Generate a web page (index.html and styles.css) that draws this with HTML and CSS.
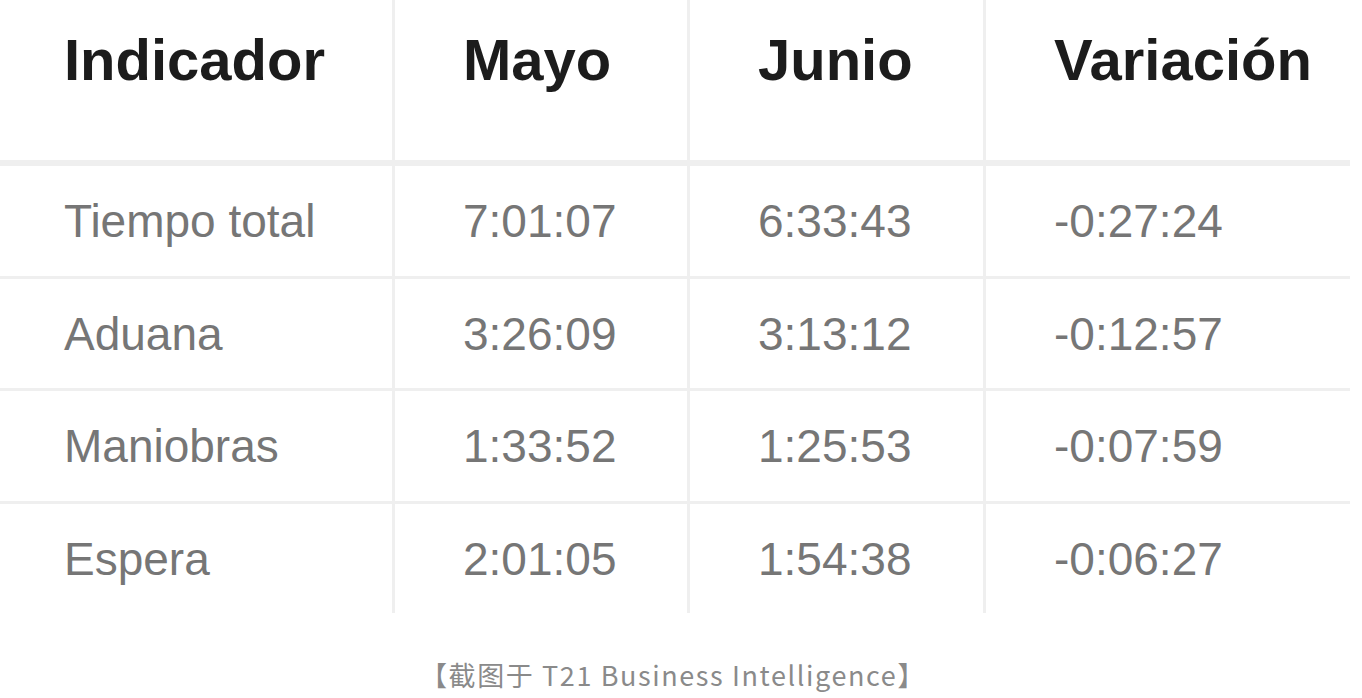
FILE: index.html
```html
<!DOCTYPE html>
<html>

<head>
    <meta charset="UTF-8">
    <title>Indicadores</title>
    <link rel="stylesheet" href="styles.css">
</head>

<body>
    <div class="wrap">
        <table class="grid">
            <colgroup>
                <col class="c1">
                <col class="c2">
                <col class="c3">
                <col class="c4">
            </colgroup>
            <thead>
                <tr>
                    <th>Indicador</th>
                    <th>Mayo</th>
                    <th>Junio</th>
                    <th>Variación</th>
                </tr>
            </thead>
            <tbody>
                <tr>
                    <td>Tiempo total</td>
                    <td>7:01:07</td>
                    <td>6:33:43</td>
                    <td>-0:27:24</td>
                </tr>
                <tr>
                    <td>Aduana</td>
                    <td>3:26:09</td>
                    <td>3:13:12</td>
                    <td>-0:12:57</td>
                </tr>
                <tr>
                    <td>Maniobras</td>
                    <td>1:33:52</td>
                    <td>1:25:53</td>
                    <td>-0:07:59</td>
                </tr>
                <tr>
                    <td>Espera</td>
                    <td>2:01:05</td>
                    <td>1:54:38</td>
                    <td>-0:06:27</td>
                </tr>
            </tbody>
        </table>
        <p class="caption">【截图于 T21 Business Intelligence】</p>
    </div>
</body>

</html>
```

FILE: styles.css
```css
body {
    margin: 0;
    background: #fff;
    font-family: "Liberation Sans", Arial, sans-serif;
}

.wrap {
    width: 1350px;
}

.grid {
    width: 1350px;
    table-layout: fixed;
    border-collapse: separate;
    border-spacing: 0;
}

.c1 {
    width: 392px;
}

.c2 {
    width: 295px;
}

.c3 {
    width: 296px;
}

.c4 {
    width: 367px;
}

.grid th,
.grid td {
    text-align: left;
    vertical-align: top;
    padding-left: 68px;
    white-space: nowrap;
}

.grid th:first-child,
.grid td:first-child {
    padding-left: 64px;
}

.grid th + th,
.grid td + td {
    border-left: 3px solid #efefef;
}

.grid th {
    height: 58px;
    padding-top: 31px;
    padding-bottom: 71px;
    font-size: 58px;
    line-height: 58px;
    font-weight: bold;
    color: #1c1c1c;
    border-bottom: 6px solid #efefef;
}

.grid td {
    height: 46px;
    padding-top: 32px;
    padding-bottom: 31.5px;
    font-size: 46px;
    line-height: 46px;
    color: #767676;
    border-bottom: 3px solid #efefef;
}

.grid tbody tr:last-child td {
    border-bottom: none;
}

.caption {
    margin: 42px 0 0 -4px;
    text-align: center;
    font-family: "Noto Sans CJK SC", "Open Sans", sans-serif;
    font-size: 27px;
    letter-spacing: 1.6px;
    color: #8a8a8a;
}
```
